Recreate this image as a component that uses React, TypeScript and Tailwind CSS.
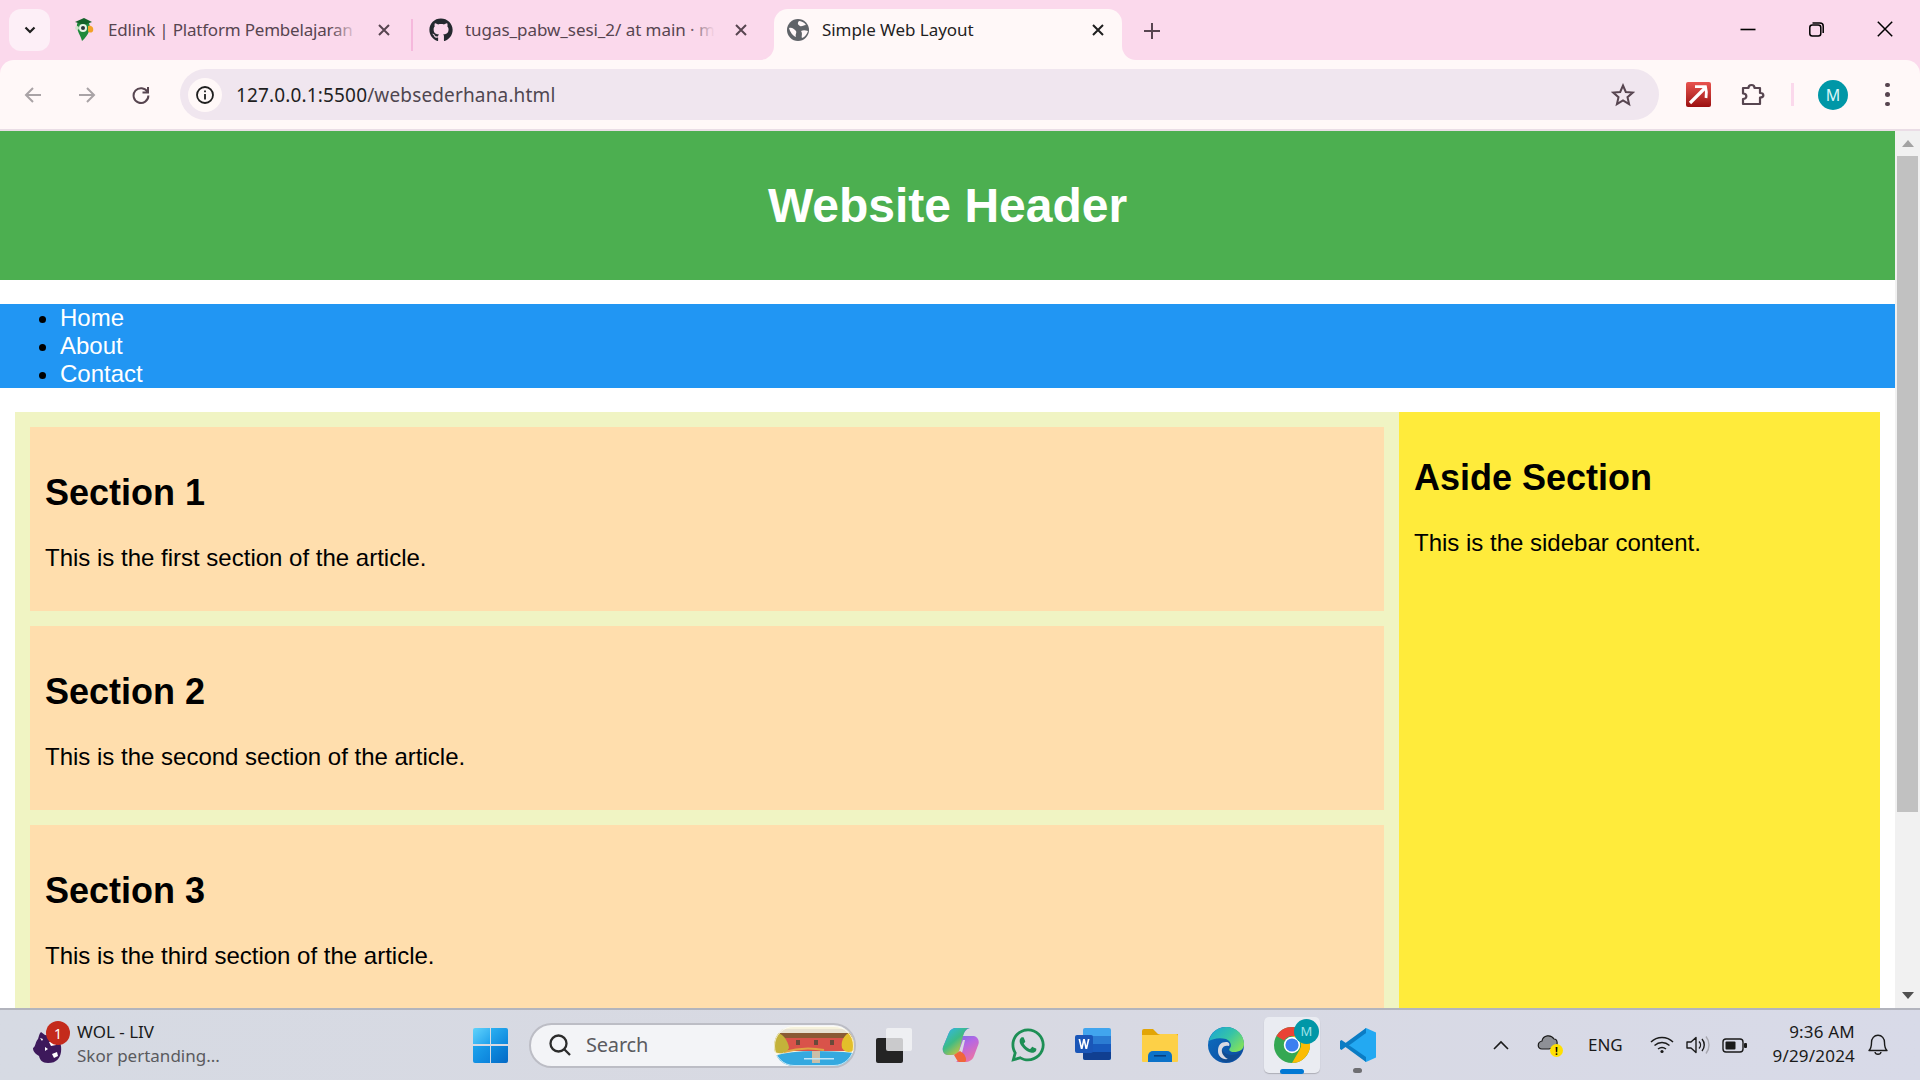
import { FaGithub } from "react-icons/fa";
import { FaWhatsapp } from "react-icons/fa";

const ui = { fontFamily: '"Noto Sans", "Open Sans", sans-serif' };

function Close({ color = "#574550" }: { color?: string }) {
  return (
    <svg width="14" height="14" viewBox="0 0 14 14" fill="none" stroke={color} strokeWidth="2">
      <path d="M2 2 L12 12 M12 2 L2 12" />
    </svg>
  );
}

function Edlink() {
  return (
    <svg width="20" height="24" viewBox="0 0 20 24">
      <path d="M3 6 C5 1 13 0 15 5 C17 10 15 17 8 23 C7 18 2 12 3 6Z" fill="#1f8a3c" />
      <path d="M1 4 L10 0 L18 4 L10 7Z" fill="#14622b" />
      <path d="M14 8 C18 7 20 10 19 13 C18 15 15 15 14 13Z" fill="#f2a227" />
      <circle cx="9" cy="10" r="4" fill="#e8f3e6" />
      <circle cx="9" cy="10" r="2" fill="#28363b" />
      <circle cx="3" cy="10" r="2" fill="#cfe3cb" />
    </svg>
  );
}

function Globe() {
  return (
    <svg width="24" height="24" viewBox="0 0 24 24">
      <circle cx="12" cy="12" r="11" fill="#5f6368" />
      <path d="M3 10 C6 9 8 11 10 13 C11 15 9 16 10 19 C7 18 4 14 3 10Z M13 3 C15 3 18 4 20 7 C17 7 16 9 14 8 C12 7 11 5 13 3Z M15 13 C17 12 19 12 22 13 C21 16 19 19 16 20 C15 18 17 16 15 13Z" fill="#fff8f9" />
    </svg>
  );
}

function TabStrip() {
  return (
    <div className="flex h-[60px] shrink-0 bg-[#fbd9ec]" style={ui}>
      <div className="ml-[9px] mt-[9px] flex h-[42px] w-[41px] shrink-0 items-center justify-center rounded-[12px] bg-[#fdeff7]">
        <svg width="12" height="8" viewBox="0 0 12 8" fill="none" stroke="#1f1f1f" strokeWidth="2.2"><path d="M1.5 1.5 L6 6 L10.5 1.5" /></svg>
      </div>
      <div className="relative ml-[16px] flex h-[51px] w-[349px] shrink-0 items-center self-end pb-[10px]">
        <div className="ml-[4px] flex w-[28px] justify-center"><Edlink /></div>
        <div className="relative ml-[10px] mt-[1px] w-[250px] overflow-hidden whitespace-nowrap text-[17px] leading-[22px] tracking-[-0.2px] text-[#574550]">
          Edlink | Platform Pembelajaran Daring
          <div className="absolute right-0 top-0 h-full w-[28px] bg-gradient-to-r from-transparent to-[#fbd9ec]" />
        </div>
        <div className="ml-[19px]"><Close /></div>
        <div className="absolute right-[2px] top-[10px] h-[32px] w-[2px] bg-[#f5b8dc]" />
      </div>
      <div className="relative flex h-[51px] w-[359px] shrink-0 items-center self-end pb-[10px]">
        <div className="ml-[12px] flex w-[28px] justify-center"><FaGithub className="h-[24px] w-[24px] text-[#24292f]" /></div>
        <div className="relative ml-[10px] mt-[1px] w-[250px] overflow-hidden whitespace-nowrap text-[17px] leading-[22px] tracking-[-0.05px] text-[#574550]">
          tugas_pabw_sesi_2/ at main · mhmmd
          <div className="absolute right-0 top-0 h-full w-[28px] bg-gradient-to-r from-transparent to-[#fbd9ec]" />
        </div>
        <div className="ml-[19px]"><Close /></div>
      </div>
      <div className="relative flex h-[51px] w-[348px] shrink-0 items-center self-end rounded-t-[14px] bg-[#fff8f8] pb-[10px]">
        <div className="absolute bottom-0 left-[-14px] h-[14px] w-[14px] bg-[#fff8f8]"><div className="h-full w-full rounded-br-[14px] bg-[#fbd9ec]" /></div>
        <div className="absolute bottom-0 right-[-14px] h-[14px] w-[14px] bg-[#fff8f8]"><div className="h-full w-full rounded-bl-[14px] bg-[#fbd9ec]" /></div>
        <div className="ml-[12px]"><Globe /></div>
        <div className="ml-[12px] mt-[1px] w-[269px] whitespace-nowrap text-[17px] leading-[22px] tracking-[-0.05px] text-[#1f1f1f]">Simple Web Layout</div>
        <div><Close color="#1f1f1f" /></div>
      </div>
      <div className="ml-[22px] mt-[23px] h-[16px]">
        <svg width="16" height="16" viewBox="0 0 16 16" stroke="#574550" strokeWidth="2"><path d="M8 0 V16 M0 8 H16" /></svg>
      </div>
      <div className="flex-1" />
      <div className="mr-[27px] mt-[20px] flex h-[18px] items-center gap-[53px]">
        <svg width="16" height="16" viewBox="0 0 16 16" stroke="#000" strokeWidth="1.6"><path d="M0.5 8.5 H15.5" /></svg>
        <svg width="15" height="15" viewBox="0 0 15 15" fill="none" stroke="#000" strokeWidth="1.5"><rect x="0.8" y="3" width="11" height="11" rx="2.5" /><path d="M3.5 1 H11 C13 1 14.2 2.2 14.2 4 V11" /></svg>
        <svg width="16" height="16" viewBox="0 0 16 16" stroke="#000" strokeWidth="1.5"><path d="M0.8 0.8 L15.2 15.2 M15.2 0.8 L0.8 15.2" /></svg>
      </div>
    </div>
  );
}

function Toolbar() {
  return (
    <div className="bg-[#fbd9ec] shrink-0">
      <div className="flex h-[71px] items-center rounded-t-[14px] border-b-2 border-[#eaddE6] bg-[#fff8f8]" style={ui}>
        <div className="ml-[24px] flex items-center gap-[36px]">
          <svg width="18" height="18" viewBox="0 0 18 18" fill="none" stroke="#a9a3a6" strokeWidth="2"><path d="M17 9 H2 M9 2 L2 9 L9 16" /></svg>
          <svg width="18" height="18" viewBox="0 0 18 18" fill="none" stroke="#a9a3a6" strokeWidth="2"><path d="M1 9 H16 M9 2 L16 9 L9 16" /></svg>
          <svg width="18" height="18" viewBox="0 0 18 18" fill="none" stroke="#574550" strokeWidth="2"><path d="M15.5 6 A7.4 7.4 0 1 0 16.4 9.5" /><path d="M16 1 V6.5 H10.5" /></svg>
        </div>
        <div className="ml-[30px] flex h-[51px] w-[1479px] items-center rounded-full bg-[#f0e6ef] pl-[8px] pr-[24px]">
          <div className="flex h-[34px] w-[34px] items-center justify-center rounded-full bg-[#fff8f8]">
            <svg width="20" height="20" viewBox="0 0 20 20" fill="none" stroke="#1f1f1f" strokeWidth="1.8"><circle cx="10" cy="10" r="8" /><path d="M10 9 V14.5 M10 5.5 V7.3" /></svg>
          </div>
          <div className="ml-[14px] flex-1 whitespace-nowrap text-[19px] leading-[26px] tracking-[0.15px] text-[#1f1f1f]">127.0.0.1:5500<span className="text-[#4f4650]">/websederhana.html</span></div>
          <svg width="24" height="24" viewBox="0 0 24 24" fill="none" stroke="#574550" strokeWidth="2"><path d="M12 2.5 L14.8 9 L21.8 9.6 L16.5 14.2 L18.1 21.2 L12 17.5 L5.9 21.2 L7.5 14.2 L2.2 9.6 L9.2 9Z" /></svg>
        </div>
        <div className="ml-[27px] flex h-[25px] w-[25px] items-center justify-center rounded-[2px] bg-gradient-to-b from-[#e9534f] to-[#9c0d10]">
          <svg width="21" height="21" viewBox="0 0 21 21" fill="none" stroke="#fff" strokeWidth="3.2"><path d="M2 19 L17 4" /><path d="M7 2.6 H17.5 C18.5 6 18.6 10 18 14" strokeWidth="2.8" /></svg>
        </div>
        <div className="ml-[29px]">
          <svg width="25" height="25" viewBox="0 0 25 25" fill="none" stroke="#574550" strokeWidth="2.2"><path d="M3 6 H8.5 C8.5 2 14.5 2 14.5 6 H20 V11 C24.5 11 24.5 15.5 20 15.5 V22 H3 V17 C7.5 17 7.5 11.5 3 11.5Z" strokeLinejoin="round" /></svg>
        </div>
        <div className="ml-[26px] h-[23px] w-[3px] bg-[#fbd9ec]" />
        <div className="ml-[24px] flex h-[30px] w-[30px] items-center justify-center rounded-full bg-[#0097a7] text-[16px] text-[#d9f5f7]">M</div>
        <div className="ml-[37px] flex flex-col gap-[5px]">
          <div className="h-[4.5px] w-[4.5px] rounded-full bg-[#574550]" />
          <div className="h-[4.5px] w-[4.5px] rounded-full bg-[#574550]" />
          <div className="h-[4.5px] w-[4.5px] rounded-full bg-[#574550]" />
        </div>
      </div>
    </div>
  );
}

function Section({ title, text }: { title: string; text: string }) {
  return (
    <section className="mb-[15px] bg-[#ffdead] px-[15px] pb-[16.2px] pt-[15px]">
      <h2 className="mb-[30.7px] mt-[30px] text-[36px] font-bold leading-[41.4px]">{title}</h2>
      <p className="mb-[23.3px] text-[24px] leading-[27.6px]">{text}</p>
    </section>
  );
}

function Page() {
  return (
    <div className="flex min-h-0 flex-1 overflow-hidden">
      <div className="min-w-0 flex-1 overflow-hidden bg-white text-black" style={{ fontFamily: '"Liberation Sans", Arial, sans-serif' }}>
        <header className="flex h-[149px] items-center justify-center bg-[#4caf50]">
          <h1 className="text-[48px] font-bold leading-[55px] text-white">Website Header</h1>
        </header>
        <nav className="my-[24px] bg-[#2196f3]">
          <ul className="list-disc pl-[60px] text-[24px] leading-[27.9px]">
            <li><a className="text-white">Home</a></li>
            <li><a className="text-white">About</a></li>
            <li><a className="text-white">Contact</a></li>
          </ul>
        </nav>
        <div className="mx-[15px] flex">
          <article className="w-[1384px] bg-[#f0f4c3] p-[15px]">
            <Section title="Section 1" text="This is the first section of the article." />
            <Section title="Section 2" text="This is the second section of the article." />
            <Section title="Section 3" text="This is the third section of the article." />
          </article>
          <aside className="flex-1 bg-[#ffeb3b] p-[15px]">
            <h2 className="mb-[31px] mt-[30px] text-[36px] font-bold leading-[41.4px]">Aside Section</h2>
            <p className="text-[24px] leading-[27.6px]">This is the sidebar content.</p>
          </aside>
        </div>
      </div>
      <div className="flex w-[25px] shrink-0 flex-col items-center bg-[#f1f1f1]">
        <div className="flex h-[25px] items-center"><div className="h-0 w-0 border-x-[6px] border-b-[7px] border-x-transparent border-b-[#a3a3a3]" /></div>
        <div className="h-[656px] w-[21px] bg-[#c1c1c1]" />
        <div className="flex-1" />
        <div className="flex h-[25px] items-center"><div className="h-0 w-0 border-x-[6px] border-t-[7px] border-x-transparent border-t-[#505050]" /></div>
      </div>
    </div>
  );
}

function Lion() {
  return (
    <svg width="30" height="34" viewBox="0 0 30 34">
      <path d="M8 2 L12 5 L20 6 C27 9 29 15 28 22 C27 28 24 33 15 33 C9 33 7 30 6 26 C3 24 0 22 0 18 C3 16 2 12 5 9 C6 6 6 4 8 2Z" fill="#3d195b" />
      <path d="M16 12 L22 11 L23 15 L18 16Z M19 24 L24 22 L25 26 L21 28Z M7 8 L10 9 L9 11Z M12 17 L15 19 L12 21Z" fill="#fff" />
    </svg>
  );
}

function WinLogo() {
  return (
    <div className="grid h-[35px] w-[35px] grid-cols-2 gap-[1.5px]">
      <div className="rounded-tl-[2px] bg-gradient-to-br from-[#5fd3fb] to-[#1ba1ec]" />
      <div className="rounded-tr-[2px] bg-gradient-to-br from-[#2bb0f1] to-[#0c86dc]" />
      <div className="rounded-bl-[2px] bg-gradient-to-br from-[#1da3ec] to-[#0c82db]" />
      <div className="rounded-br-[2px] bg-gradient-to-br from-[#0f8ee0] to-[#0669c5]" />
    </div>
  );
}

function Bridge() {
  return (
    <svg width="80" height="40" viewBox="0 0 80 40">
      <defs><clipPath id="br"><rect x="0" y="0" width="80" height="40" rx="20" /></clipPath></defs>
      <g clipPath="url(#br)">
        <rect width="80" height="40" fill="#f6f2dc" />
        <rect x="0" y="3" width="80" height="5" fill="#e7e2d2" />
        <path d="M6 7 H76 L80 12 H2Z" fill="#8a5a34" />
        <rect x="8" y="12" width="66" height="13" fill="#d9534a" />
        <rect x="22" y="14" width="4" height="5" fill="#6a4a3a" /><rect x="40" y="14" width="4" height="5" fill="#6a4a3a" /><rect x="56" y="14" width="4" height="5" fill="#6a4a3a" />
        <path d="M0 30 Q25 22 80 27 V40 H0Z" fill="#34a9e0" />
        <path d="M10 26 Q30 20 50 24" stroke="#e0a543" strokeWidth="2" fill="none" />
        <rect x="38" y="25" width="8" height="12" fill="#c9bfa9" />
        <path d="M0 6 C8 6 14 14 15 22 C12 28 5 28 0 26Z" fill="#c4b23a" />
        <path d="M80 5 C72 6 66 14 68 22 C72 28 78 26 80 24Z" fill="#e3bf2a" />
        <rect x="30" y="32" width="30" height="1.5" fill="#bfe6f7" />
      </g>
      <rect x="0.5" y="0.5" width="79" height="39" rx="19.5" fill="none" stroke="#fff" strokeOpacity="0.7" />
    </svg>
  );
}

function Copilot() {
  return (
    <svg width="37" height="36" viewBox="0 0 37 36">
      <defs>
        <linearGradient id="cpA" x1="0" y1="0" x2="0.8" y2="1"><stop offset="0" stopColor="#2fb7f5" /><stop offset="0.5" stopColor="#3dbb86" /><stop offset="1" stopColor="#f3c62c" /></linearGradient>
        <linearGradient id="cpB" x1="0.2" y1="0" x2="0.8" y2="1"><stop offset="0" stopColor="#3f78ee" /><stop offset="0.55" stopColor="#b667e3" /><stop offset="1" stopColor="#f0749f" /></linearGradient>
      </defs>
      <path d="M14 1 H28 C24 2 22 5 21 9 L32 9 C35.5 10 37.5 13 36.5 17 L32 29 C30.5 33 27 35 23 35 H14 C18 33 19 28 20.5 24 L23 13 H21 L17 24 C15 27 12 28 9 28 H6 C2 28 0 24 1 20 L6 8 C8 3 10 1 14 1Z" fill="url(#cpB)" />
      <path d="M14 1 H27 C23.5 2 22 5 21 9 L17 24 C15.5 27 12 28 9 28 H6 C2 28 0 24 1 20 L6 8 C8 3 10 1 14 1Z" fill="url(#cpA)" />
      <path d="M12 28 C14 31 15 34 17 35 H23 C25 34 24 30 22 27 L18 24Z" fill="#f0663a" />
    </svg>
  );
}

function Word() {
  return (
    <svg width="36" height="34" viewBox="0 0 36 34">
      <rect x="8" y="0" width="28" height="32" rx="2" fill="#41a5ee" />
      <rect x="8" y="8" width="28" height="8" fill="#2b7cd3" />
      <rect x="8" y="16" width="28" height="8" fill="#185abd" />
      <path d="M8 24 H36 V30 a2 2 0 0 1 -2 2 H10 a2 2 0 0 1 -2 -2Z" fill="#103f91" />
      <rect x="0" y="7" width="18" height="18" rx="2" fill="#1a56b8" />
      <path d="M3.5 11 L5.8 21 H7.6 L9 14.5 L10.4 21 H12.2 L14.5 11 H12.8 L11.3 17.8 L9.9 11 H8.1 L6.7 17.8 L5.2 11Z" fill="#fff" />
    </svg>
  );
}

function Folder() {
  return (
    <svg width="36" height="33" viewBox="0 0 36 33">
      <path d="M0 2 a2 2 0 0 1 2 -2 H11 L16 5 H36 V10 H0Z" fill="#e2a506" />
      <path d="M0 6 H16 L18 5 H34 a2 2 0 0 1 2 2 V32 a1 1 0 0 1 -1 1 H1 a1 1 0 0 1 -1 -1Z" fill="#fdd047" />
      <path d="M6 33 V27 a5 5 0 0 1 5 -5 H25 a5 5 0 0 1 5 5 V33Z" fill="#0b72c9" />
      <rect x="12" y="26" width="12" height="1.6" fill="#063f80" />
    </svg>
  );
}

function Edge() {
  return (
    <svg width="36" height="36" viewBox="0 0 36 36">
      <defs>
        <linearGradient id="egA" x1="0" y1="0" x2="1" y2="0.7"><stop offset="0" stopColor="#1aa3d8" /><stop offset="0.55" stopColor="#35c3a8" /><stop offset="1" stopColor="#7fe05f" /></linearGradient>
        <linearGradient id="egB" x1="0" y1="0" x2="1" y2="1"><stop offset="0" stopColor="#0c6fc2" /><stop offset="1" stopColor="#0e4a9c" /></linearGradient>
      </defs>
      <circle cx="18" cy="18" r="18" fill="url(#egB)" />
      <path d="M1 14 C3 5 10 0 18 0 C29 0 36 8 36 17 C36 23 31 25 26 25 C22 25 20 23 22 21 C24 19 23 14 18 12 C11 10 4 12 1 14Z" fill="url(#egA)" />
      <path d="M13 19 C13 24 18 28 23 28 C27 28 31 27 33 25 C29 33 20 37 14 34 C10 31 10 22 13 19Z" fill="#114c92" />
      <path d="M10 24 C10 18 13 15 18 15 C21 15 22 17 21 19 C18 18 15 19 14 22 C13 26 16 30 20 32 C14 33 10 29 10 24Z" fill="#d8dae3" />
    </svg>
  );
}

function Chrome() {
  return (
    <svg width="36" height="36" viewBox="0 0 36 36">
      <circle cx="18" cy="18" r="18" fill="#34a853" />
      <path d="M18 0 A18 18 0 0 1 33.6 9 H18 A9 9 0 0 0 10.2 13.5 L2.4 9 A18 18 0 0 1 18 0Z" fill="#ea4335" />
      <path d="M33.6 9 A18 18 0 0 1 18 36 L25.8 22.5 A9 9 0 0 0 25.8 13.5 L18 9Z" fill="#fbbc04" />
      <circle cx="18" cy="18" r="8.2" fill="#fff" />
      <circle cx="18" cy="18" r="6.6" fill="#3b7ff0" />
    </svg>
  );
}

function VSCode() {
  return (
    <svg width="36" height="36" viewBox="0 0 36 36">
      <path d="M26 1 L36 5.5 V30.5 L26 35 L9 18.5Z" fill="#23a9f2" />
      <path d="M26 1 V35 L5.5 20 L1.5 23 L0 22 V14 L1.5 13 L26 30 V6 L9 18.5 L5.5 16 Z" fill="#0a7cc4" />
    </svg>
  );
}

function Taskbar() {
  return (
    <div className="flex h-[72px] shrink-0 items-center border-t-2 border-[#b2b4bd] bg-gradient-to-r from-[#d6dae3] via-[#d8d9e2] to-[#d8dae8] text-[#1a1a1a]" style={ui}>
      <div className="relative ml-[33px] mt-[4px] flex w-[30px] shrink-0">
        <Lion />
        <div className="absolute left-[13px] top-[-9px] flex h-[24px] w-[24px] items-center justify-center rounded-full bg-[#c42b1c] text-[14px] text-white">1</div>
      </div>
      <div className="ml-[14px] mt-[-2px] w-[160px] shrink-0">
        <div className="text-[17px] leading-[24px]">WOL - LIV</div>
        <div className="text-[17px] leading-[24px] text-[#5a5a5e]">Skor pertanding...</div>
      </div>
      <div className="ml-[236px] shrink-0"><WinLogo /></div>
      <div className="relative ml-[21px] flex h-[45px] w-[327px] shrink-0 items-center rounded-full border-2 border-[#bcbdc5] bg-[#f3f4f7] pl-[17px]">
        <svg width="24" height="24" viewBox="0 0 24 24" fill="none" stroke="#2b2b2b" strokeWidth="2.3"><circle cx="10.5" cy="10.5" r="8" /><path d="M16 16 L22 22" /></svg>
        <div className="ml-[14px] text-[20px] leading-[28px] tracking-[-0.2px] text-[#5b5b5f]">Search</div>
        <div className="absolute right-[0px] top-[1px]"><Bridge /></div>
      </div>
      <div className="relative ml-[20px] h-[35px] w-[36px] shrink-0">
        <div className="absolute bottom-0 left-0 h-[25px] w-[27px] rounded-[2px] bg-[#242424]" />
        <div className="absolute right-0 top-0 h-[23px] w-[26px] rounded-[2px] bg-[#f4f4f6]/80" />
      </div>
      <div className="ml-[30px] shrink-0"><Copilot /></div>
      <div className="ml-[30px] shrink-0"><FaWhatsapp className="h-[38px] w-[38px] text-[#1d8f55]" /></div>
      <div className="ml-[28px] shrink-0"><Word /></div>
      <div className="ml-[31px] shrink-0"><Folder /></div>
      <div className="ml-[30px] shrink-0"><Edge /></div>
      <div className="relative ml-[20px] flex h-[56px] w-[56px] shrink-0 items-center justify-center rounded-[5px] bg-[#eaecf2] shadow-[0_1px_1px_rgba(0,0,0,0.2)]">
        <Chrome />
        <div className="absolute left-[30px] top-[2px] flex h-[25px] w-[25px] items-center justify-center rounded-full bg-[#0097a7] text-[13px] text-[#9fe3ea]">M</div>
        <div className="absolute bottom-[-1px] left-[16px] h-[5px] w-[24px] rounded-full bg-[#0078d4]" />
      </div>
      <div className="relative ml-[20px] shrink-0">
        <VSCode />
        <div className="absolute bottom-[-10px] left-[13px] h-[5px] w-[9px] rounded-full bg-[#6e6e72]" />
      </div>
      <div className="ml-[117px] shrink-0">
        <svg width="16" height="10" viewBox="0 0 16 10" fill="none" stroke="#1a1a1a" strokeWidth="1.6"><path d="M1 9 L8 2 L15 9" /></svg>
      </div>
      <div className="relative ml-[28px] h-[24px] w-[26px] shrink-0">
        <svg width="22" height="18" viewBox="0 0 22 18" className="absolute left-0 top-0"><path d="M5 16 C0 16 0 9 5 8 C6 2 14 1 17 6 C21 6 21 13 18 14 L12 16Z" fill="#8e9096" stroke="#1a1a1a" strokeWidth="1.2" /></svg>
        <div className="absolute bottom-0 right-0 flex h-[13px] w-[13px] items-center justify-center rounded-full bg-[#ffe000] text-[10px] font-bold leading-none text-black">!</div>
      </div>
      <div className="ml-[25px] w-[36px] shrink-0 whitespace-nowrap text-[17px] leading-[22px]">ENG</div>
      <div className="ml-[26px] shrink-0">
        <svg width="24" height="18" viewBox="0 0 24 18" fill="none" stroke="#1a1a1a" strokeWidth="1.5"><path d="M1 6 C7 0 17 0 23 6 M4.5 9.5 C9 5.5 15 5.5 19.5 9.5 M8 13 C10.5 11 13.5 11 16 13" /><circle cx="12" cy="15.5" r="1.6" fill="#1a1a1a" stroke="none" /></svg>
      </div>
      <div className="ml-[12px] shrink-0">
        <svg width="24" height="20" viewBox="0 0 24 20" fill="none" stroke="#1a1a1a" strokeWidth="1.4"><path d="M1 7 H5 L10 2.5 V17.5 L5 13 H1Z" strokeLinejoin="round" /><path d="M13 6.5 C15 8.5 15 11.5 13 13.5 M16 4 C19 7.5 19 12.5 16 16" /><path d="M20 1.5 C24 6.5 24 13.5 20 18.5" stroke="#a8a8b0" /></svg>
      </div>
      <div className="ml-[12px] shrink-0">
        <svg width="25" height="15" viewBox="0 0 25 15" fill="none"><rect x="1" y="1" width="20" height="13" rx="3" stroke="#1a1a1a" strokeWidth="1.4" /><rect x="3.5" y="3.5" width="10" height="8" rx="1" fill="#1a1a1a" /><rect x="22" y="5" width="3" height="5" rx="1" fill="#1a1a1a" /></svg>
      </div>
      <div className="ml-[15px] mt-[-3px] w-[93px] shrink-0 whitespace-nowrap text-right text-[17px] leading-[24px] tracking-[0.2px]">
        <div>9:36 AM</div>
        <div>9/29/2024</div>
      </div>
      <div className="ml-[13px] shrink-0">
        <svg width="20" height="22" viewBox="0 0 20 22" fill="none" stroke="#1a1a1a" strokeWidth="1.4"><path d="M1 16.5 C3 14.5 3.5 13 3.5 8.5 C3.5 4.5 6 1.2 10 1.2 C14 1.2 16.5 4.5 16.5 8.5 C16.5 13 17 14.5 19 16.5Z" strokeLinejoin="round" /><path d="M7 18 C7.5 21 12.5 21 13 18" /></svg>
      </div>
    </div>
  );
}

export default function App() {
  return (
    <div className="flex h-screen w-screen flex-col overflow-hidden">
      <TabStrip />
      <Toolbar />
      <Page />
      <Taskbar />
    </div>
  );
}
